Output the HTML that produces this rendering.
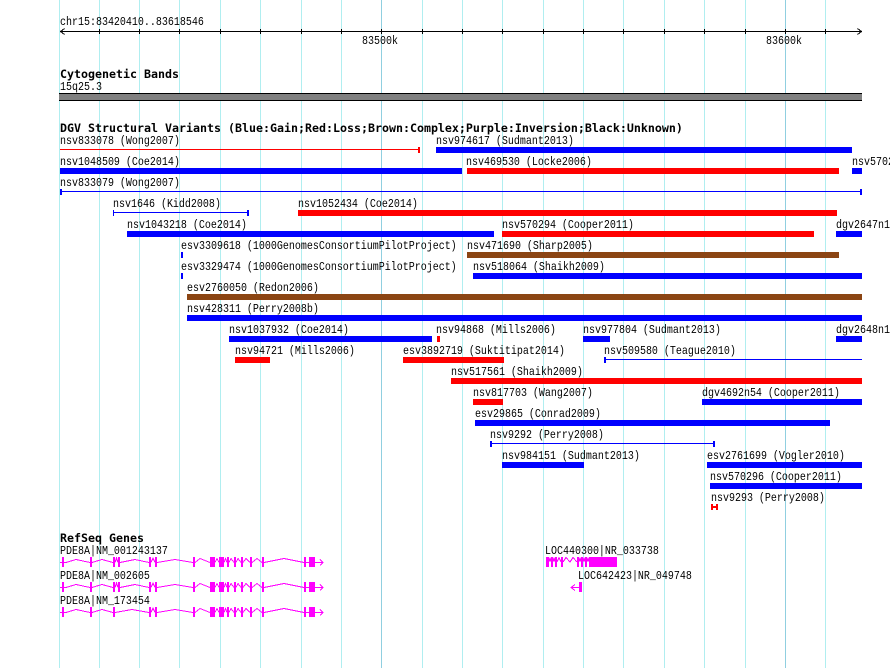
<!DOCTYPE html>
<html><head><meta charset="utf-8"><style>
html,body{margin:0;padding:0;background:#fff;width:890px;height:668px;overflow:hidden}
svg{display:block}
text{font-family:"Liberation Mono",monospace;font-size:10px;fill:#000}
text.b{font-family:"DejaVu Sans Mono","Liberation Mono",monospace;font-weight:bold;font-size:11.63px}
.g{fill:none;stroke:#f0f;stroke-width:1;shape-rendering:crispEdges}
</style></head><body>
<svg width="890" height="668" viewBox="0 0 890 668" xmlns="http://www.w3.org/2000/svg">
<g shape-rendering="crispEdges" fill="#b0eef0">
<rect x="59" y="0" width="1" height="668"/><rect x="99" y="0" width="1" height="668"/><rect x="139" y="0" width="1" height="668"/><rect x="179" y="0" width="1" height="668"/><rect x="220" y="0" width="1" height="668"/><rect x="260" y="0" width="1" height="668"/><rect x="301" y="0" width="1" height="668"/><rect x="341" y="0" width="1" height="668"/><rect x="422" y="0" width="1" height="668"/><rect x="462" y="0" width="1" height="668"/><rect x="502" y="0" width="1" height="668"/><rect x="543" y="0" width="1" height="668"/><rect x="583" y="0" width="1" height="668"/><rect x="623" y="0" width="1" height="668"/><rect x="664" y="0" width="1" height="668"/><rect x="704" y="0" width="1" height="668"/><rect x="745" y="0" width="1" height="668"/><rect x="825" y="0" width="1" height="668"/>
<rect x="381" y="0" width="1" height="668" fill="#90cfe0"/><rect x="785" y="0" width="1" height="668" fill="#90cfe0"/>
</g>
<g shape-rendering="crispEdges">
<rect x="60" y="31" width="802" height="1" fill="#000"/>
<path d="M99.5 29v5M139.5 29v5M179.5 29v5M220.5 29v5M260.5 29v5M301.5 29v5M341.5 29v5M381.5 29v5M422.5 29v5M462.5 29v5M502.5 29v5M543.5 29v5M583.5 29v5M623.5 29v5M664.5 29v5M704.5 29v5M745.5 29v5M785.5 29v5M825.5 29v5" stroke="#000" fill="none"/>
<path d="M60.5 31.5l4-3M60.5 31.5l4 3M861.5 31.5l-4-3M861.5 31.5l-4 3" stroke="#000" fill="none"/>
<rect x="59" y="93" width="803" height="8" fill="#000"/><rect x="59" y="94" width="803" height="6" fill="#808080"/>
<g fill="#00f">
<rect x="436" y="147" width="416" height="6"/>
<rect x="60" y="168" width="402" height="6"/><rect x="852" y="168" width="10" height="6"/>
<rect x="60" y="191" width="802" height="1"/><rect x="60" y="189" width="2" height="6"/><rect x="860" y="189" width="2" height="6"/>
<rect x="113" y="212" width="135" height="1"/><rect x="113" y="210" width="1" height="6"/><rect x="247" y="210" width="2" height="6"/>
<rect x="127" y="231" width="367" height="6"/><rect x="836" y="231" width="26" height="6"/>
<rect x="181" y="252" width="2" height="6"/><rect x="181" y="273" width="2" height="6"/>
<rect x="473" y="273" width="389" height="6"/>
<rect x="187" y="315" width="675" height="6"/>
<rect x="229" y="336" width="203" height="6"/><rect x="583" y="336" width="27" height="6"/><rect x="836" y="336" width="26" height="6"/>
<rect x="604" y="359" width="258" height="1"/><rect x="604" y="357" width="2" height="6"/>
<rect x="702" y="399" width="160" height="6"/>
<rect x="475" y="420" width="355" height="6"/>
<rect x="490" y="443" width="224" height="1"/><rect x="490" y="441" width="2" height="6"/><rect x="713" y="441" width="2" height="6"/>
<rect x="502" y="462" width="82" height="6"/><rect x="707" y="462" width="155" height="6"/>
<rect x="710" y="483" width="152" height="6"/>
</g>
<g fill="#f00">
<rect x="60" y="149" width="358" height="1"/><rect x="418" y="147" width="2" height="6"/>
<rect x="467" y="168" width="372" height="6"/>
<rect x="298" y="210" width="539" height="6"/>
<rect x="502" y="231" width="312" height="6"/>
<rect x="437" y="336" width="3" height="6"/>
<rect x="235" y="357" width="35" height="6"/><rect x="403" y="357" width="101" height="6"/>
<rect x="451" y="378" width="411" height="6"/>
<rect x="473" y="399" width="30" height="6"/>
<rect x="711" y="504" width="2" height="6"/><rect x="716" y="504" width="2" height="6"/><rect x="711" y="506" width="7" height="2"/>
</g>
<g fill="#8b4513">
<rect x="467" y="252" width="372" height="6"/>
<rect x="187" y="294" width="675" height="6"/>
</g>
</g>
<text class="b" x="60" y="78">Cytogenetic Bands</text>
<text class="b" x="60" y="132">DGV Structural Variants (Blue:Gain;Red:Loss;Brown:Complex;Purple:Inversion;Black:Unknown)</text>
<text class="b" x="60" y="542">RefSeq Genes</text>
<g transform="scale(1,1.2)">
<text x="60" y="20.833">chr15:83420410..83618546</text>
<text x="362" y="36.667">83500k</text>
<text x="766" y="36.667">83600k</text>
<text x="60" y="75">15q25.3</text>
<text x="60" y="120">nsv833078 (Wong2007)</text>
<text x="436" y="120">nsv974617 (Sudmant2013)</text>
<text x="60" y="137.5">nsv1048509 (Coe2014)</text>
<text x="466" y="137.5">nsv469530 (Locke2006)</text>
<text x="852" y="137.5">nsv570295</text>
<text x="60" y="155">nsv833079 (Wong2007)</text>
<text x="113" y="172.5">nsv1646 (Kidd2008)</text>
<text x="298" y="172.5">nsv1052434 (Coe2014)</text>
<text x="127" y="190">nsv1043218 (Coe2014)</text>
<text x="502" y="190">nsv570294 (Cooper2011)</text>
<text x="836" y="190">dgv2647n1</text>
<text x="181" y="207.5">esv3309618 (1000GenomesConsortiumPilotProject)</text>
<text x="467" y="207.5">nsv471690 (Sharp2005)</text>
<text x="181" y="225">esv3329474 (1000GenomesConsortiumPilotProject)</text>
<text x="473" y="225">nsv518064 (Shaikh2009)</text>
<text x="187" y="242.5">esv2760050 (Redon2006)</text>
<text x="187" y="260">nsv428311 (Perry2008b)</text>
<text x="229" y="277.5">nsv1037932 (Coe2014)</text>
<text x="436" y="277.5">nsv94868 (Mills2006)</text>
<text x="583" y="277.5">nsv977804 (Sudmant2013)</text>
<text x="836" y="277.5">dgv2648n1</text>
<text x="235" y="295">nsv94721 (Mills2006)</text>
<text x="403" y="295">esv3892719 (Suktitipat2014)</text>
<text x="604" y="295">nsv509580 (Teague2010)</text>
<text x="451" y="312.5">nsv517561 (Shaikh2009)</text>
<text x="473" y="330">nsv817703 (Wang2007)</text>
<text x="702" y="330">dgv4692n54 (Cooper2011)</text>
<text x="475" y="347.5">esv29865 (Conrad2009)</text>
<text x="490" y="365">nsv9292 (Perry2008)</text>
<text x="502" y="382.5">nsv984151 (Sudmant2013)</text>
<text x="707" y="382.5">esv2761699 (Vogler2010)</text>
<text x="710" y="400">nsv570296 (Cooper2011)</text>
<text x="711" y="417.5">nsv9293 (Perry2008)</text>
<text x="60" y="461.667">PDE8A|NM_001243137</text>
<text x="60" y="482.5">PDE8A|NM_002605</text>
<text x="60" y="503.333">PDE8A|NM_173454</text>
<text x="545" y="461.667">LOC440300|NR_033738</text>
<text x="578" y="482.5">LOC642423|NR_049748</text>
</g>
<g>
<path class="g" d="M60 562.5H66L76 559.5L90 562.5M92 562.5L102 559.5L113 562.5M115 562.5L116.5 558L118 562.5M120 562.5L135 559.5L149 562.5M151 562.5L153 558L155 562.5M157 562.5L175 559.5L193 562.5M195 562.5L200 558.5L210 562.5M215 562.5L217 558.5L219 562.5M224 562.5L225.5 558.5L227 562.5M229 562.5L231 558.5L234 562.5M236 562.5L238 558.5L241 562.5M243 562.5L246 558.5L250 562.5M252 562.5L257 558.5L262 562.5M264 562.5L284 558.5L304 562.5M306 562.5H309M315 562.5H323M320 559.5L323 562.5L320 565.5"/>
<path fill="#f0f" shape-rendering="crispEdges" d="M62 557h2v10h-2zM90 557h2v10h-2zM113 557h2v10h-2zM118 557h2v10h-2zM149 557h2v10h-2zM155 557h2v10h-2zM193 557h2v10h-2zM210 557h5v10h-5zM219 557h5v10h-5zM227 557h2v10h-2zM234 557h2v10h-2zM241 557h2v10h-2zM250 557h2v10h-2zM262 557h2v10h-2zM304 557h2v10h-2zM309 557h6v10h-6z"/>
</g>
<g transform="translate(0,25)">
<path class="g" d="M60 562.5H66L76 559.5L90 562.5M92 562.5L102 559.5L113 562.5M115 562.5L116.5 558L118 562.5M120 562.5L135 559.5L149 562.5M151 562.5L153 558L155 562.5M157 562.5L175 559.5L193 562.5M195 562.5L200 558.5L210 562.5M215 562.5L217 558.5L219 562.5M224 562.5L225.5 558.5L227 562.5M229 562.5L231 558.5L234 562.5M236 562.5L238 558.5L241 562.5M243 562.5L246 558.5L250 562.5M252 562.5L257 558.5L262 562.5M264 562.5L284 558.5L304 562.5M306 562.5H309M315 562.5H323M320 559.5L323 562.5L320 565.5"/>
<path fill="#f0f" shape-rendering="crispEdges" d="M62 557h2v10h-2zM90 557h2v10h-2zM113 557h2v10h-2zM118 557h2v10h-2zM149 557h2v10h-2zM155 557h2v10h-2zM193 557h2v10h-2zM210 557h5v10h-5zM219 557h5v10h-5zM227 557h2v10h-2zM234 557h2v10h-2zM241 557h2v10h-2zM250 557h2v10h-2zM262 557h2v10h-2zM304 557h2v10h-2zM309 557h6v10h-6z"/>
</g>
<g transform="translate(0,50)">
<path class="g" d="M60 562.5H66L76 559.5L90 562.5M92 562.5L102 559.5L113 562.5M115 562.5L132 559.5L149 562.5M151 562.5L153 558L155 562.5M157 562.5L175 559.5L193 562.5M195 562.5L200 558.5L210 562.5M215 562.5L217 558.5L219 562.5M224 562.5L225.5 558.5L227 562.5M229 562.5L231 558.5L234 562.5M236 562.5L238 558.5L241 562.5M243 562.5L246 558.5L250 562.5M252 562.5L257 558.5L262 562.5M264 562.5L284 558.5L304 562.5M306 562.5H309M315 562.5H323M320 559.5L323 562.5L320 565.5"/>
<path fill="#f0f" shape-rendering="crispEdges" d="M62 557h2v10h-2zM90 557h2v10h-2zM113 557h2v10h-2zM149 557h2v10h-2zM155 557h2v10h-2zM193 557h2v10h-2zM210 557h5v10h-5zM219 557h5v10h-5zM227 557h2v10h-2zM234 557h2v10h-2zM241 557h2v10h-2zM250 557h2v10h-2zM262 557h2v10h-2zM304 557h2v10h-2zM309 557h6v10h-6z"/>
</g>
<path class="g" d="M549 562L550 557.5L551 562M553 562L554 557.5L555 562M557 562L559 557.5L561 562M563 562L566 557.5L570 562L573 557.5L577 562M579 562L580 557.5L581 562M583 562L584 557.5L585 562M587 562L588 557.5L589 562"/>
<path fill="#f0f" shape-rendering="crispEdges" d="M546 557h3v10h-3zM551 557h2v10h-2zM555 557h2v10h-2zM561 557h2v10h-2zM577 557h2v10h-2zM581 557h2v10h-2zM585 557h2v10h-2zM589 557h2v10h-2zM591 557h26v10h-26z"/>
<path class="g" d="M571 587.5H579M575 584.5L571 587.5L575 590.5"/>
<rect x="579" y="582" width="3" height="10" fill="#f0f" shape-rendering="crispEdges"/>
</svg>
</body></html>
